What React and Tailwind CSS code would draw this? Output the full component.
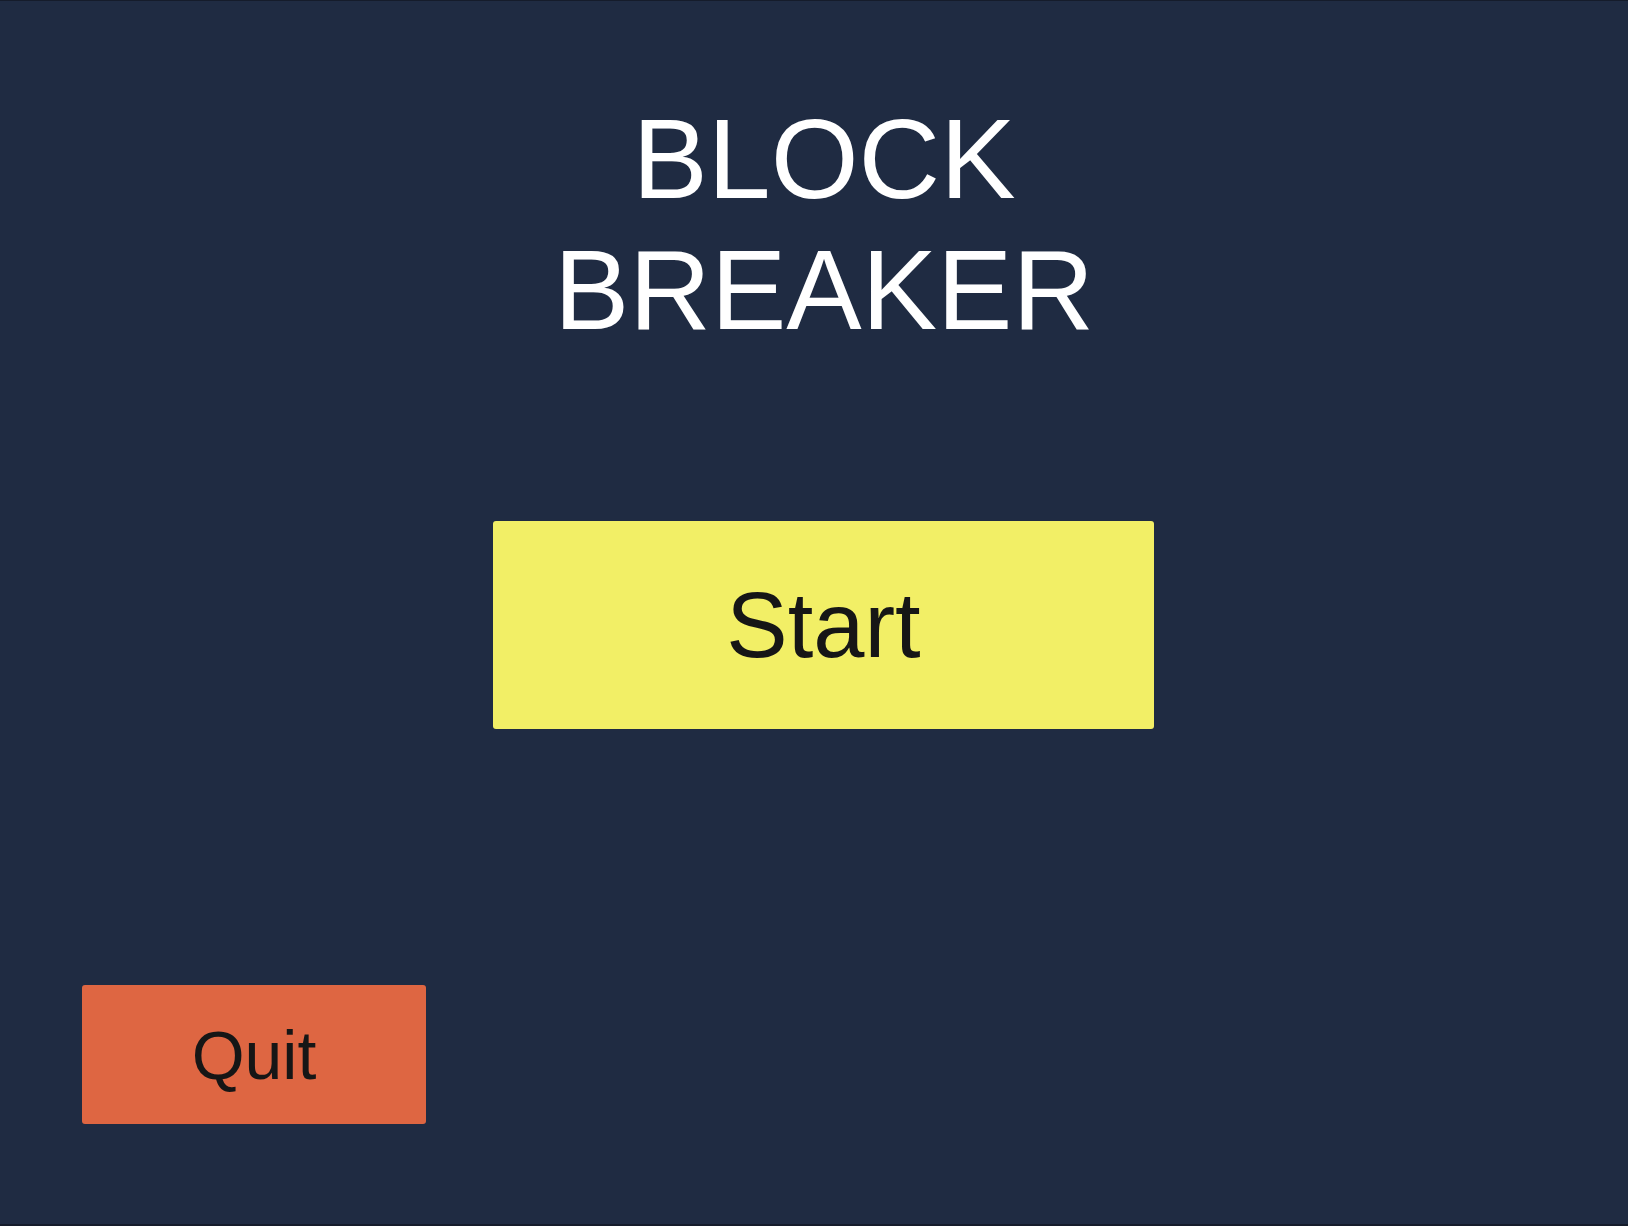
export default function App() {
  return (
    <div
      className="w-full h-[1226px] bg-[#1f2b42] border-t border-b-2 border-[#151c2b] flex flex-col"
      style={{ fontFamily: '"Liberation Sans", Arial, sans-serif' }}
    >
      <div className="flex flex-col items-center pl-[20px] pt-[93px]">
        <h1 className="text-white text-[113px] leading-[131px] font-normal text-center">
          BLOCK
          <br />
          BREAKER
        </h1>
        <button className="mt-[165px] ml-[-1px] w-[661px] h-[208px] bg-[#f2ef66] rounded-[3px] flex items-center justify-center text-[92px] leading-none text-[#161616]">
          Start
        </button>
      </div>
      <div className="pl-[82px] mt-[256px]">
        <button className="w-[344px] h-[139px] bg-[#de6642] rounded-[3px] flex items-center justify-center text-[68px] leading-none text-[#161616]">
          Quit
        </button>
      </div>
    </div>
  );
}
